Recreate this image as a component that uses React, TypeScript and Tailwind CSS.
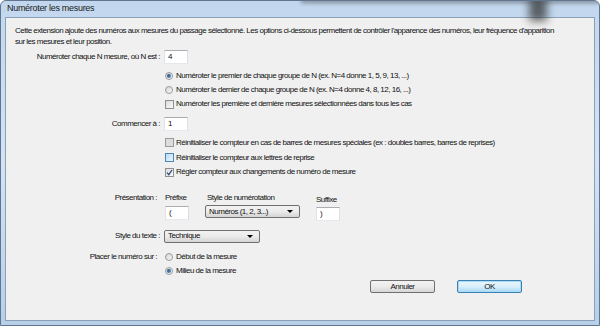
const font = { fontFamily: '"Liberation Sans", Arial, sans-serif' }

const Radio = ({ checked = false }: { checked?: boolean }) => (
    <span className="flex h-[8px] w-[8px] shrink-0 items-center justify-center rounded-full border border-[#9a9a9a] bg-gradient-to-br from-[#d2d2d2] to-[#fbfbfb]">
        {checked && <span className="h-[4px] w-[4px] rounded-full bg-gradient-to-br from-[#1b4a74] to-[#5a9bd0]" />}
    </span>
)

const Check = ({ variant = 'normal' }: { variant?: 'normal' | 'grey' | 'hover' | 'checked' }) => {
    const cls =
        variant === 'grey'
            ? 'border-[#9a9a9a] bg-[#dcdcdc]'
            : variant === 'hover'
              ? 'border-[#4f86b3] bg-gradient-to-br from-[#b9dcf4] to-[#e8f5fd]'
              : 'border-[#8f8f8f] bg-gradient-to-br from-[#dadada] to-[#fbfbfb]'
    return (
        <span className={`flex h-[9px] w-[9px] shrink-0 items-center justify-center border ${cls}`}>
            {variant === 'checked' && (
                <svg width="7" height="7" viewBox="0 0 7 7">
                    <path d="M1 3.6 L2.8 5.6 L6 1" stroke="#2a4b78" strokeWidth="1.3" fill="none" />
                </svg>
            )}
        </span>
    )
}

const TextBox = ({ value, w = 'w-[24px]' }: { value: string; w?: string }) => (
    <div className={`flex h-[14px] ${w} items-center border border-[#abadb3] border-l-[#e2e3ea] border-r-[#dbdfe6] border-b-[#e3e9ef] bg-white pl-[3px]`}>
        {value}
    </div>
)

const Combo = ({ value, w }: { value: string; w: string }) => (
    <div className={`flex h-[13px] ${w} items-center justify-between rounded-[2px] border border-[#707070] bg-gradient-to-b from-[#f2f2f2] via-[#ebebeb] to-[#d4d4d4] pl-[3px] pr-[6px]`}>
        <span>{value}</span>
        <span className="h-0 w-0 border-x-[3px] border-t-[3px] border-x-transparent border-t-black" />
    </div>
)

const Label = ({ children, pr = 'pr-0' }: { children: React.ReactNode; pr?: string }) => (
    <div className={`w-[154px] shrink-0 text-right ${pr}`}>{children}</div>
)

export default function App() {
    return (
        <div
            className="relative h-[326px] w-[600px] overflow-hidden rounded-t-[6px] border border-[#5f7590] bg-gradient-to-b from-[#c2d7ee] via-[#d3e3f4] to-[#b7cfe9] text-[8px] tracking-[-0.5px] text-[#111]"
            style={font}
        >
            <div className="absolute left-[528px] top-[-4px] h-[24px] w-[18px] bg-[#2a2a2a] opacity-70 blur-[4px]" />
            <div className="absolute left-[300px] top-[-2px] h-[4px] w-[300px] bg-[#333] opacity-50 blur-[2px]" />
            <div className="relative flex h-[16px] items-center pl-[6px] text-[9px] tracking-[-0.3px] text-[#1a1a1a]">
                Numéroter les mesures
            </div>
            <div className="mx-[4px] h-[304px] w-[590px] border border-[#8aa0b8] bg-[#f0f0f0]">
                <div className="pl-[9px] pt-[7px] leading-[11px]">
                    Cette extension ajoute des numéros aux mesures du passage sélectionné. Les options ci-dessous permettent de
                    contrôler l'apparence des numéros, leur fréquence d'apparition
                    <br />
                    sur les mesures et leur position.
                </div>

                <div className="mt-[3px] flex h-[14px] items-center">
                    <Label>Numéroter chaque N mesure, où N est :</Label>
                    <div className="ml-[4px]">
                        <TextBox value="4" />
                    </div>
                </div>

                <div className="mt-[4px] flex h-[15px] items-center pl-[159px]">
                    <Radio checked />
                    <span className="ml-[3px]">Numéroter le premier de chaque groupe de N (ex. N=4 donne 1, 5, 9, 13, ...)</span>
                </div>
                <div className="flex h-[14px] items-center pl-[159px]">
                    <Radio />
                    <span className="ml-[3px]">Numéroter le dernier de chaque groupe de N (ex. N=4 donne 4, 8, 12, 16, ...)</span>
                </div>
                <div className="flex h-[14px] items-center pl-[159px]">
                    <Check />
                    <span className="ml-[2px]">Numéroter les première et dernière mesures sélectionnées dans tous les cas</span>
                </div>

                <div className="mt-[6px] flex h-[14px] items-center">
                    <Label>Commencer à :</Label>
                    <div className="ml-[4px]">
                        <TextBox value="1" />
                    </div>
                </div>

                <div className="mt-[4px] flex h-[15px] items-center pl-[159px]">
                    <Check variant="grey" />
                    <span className="ml-[2px]">
                        Réinitialiser le compteur en cas de barres de mesures spéciales (ex : doubles barres, barres de reprises)
                    </span>
                </div>
                <div className="flex h-[15px] items-center pl-[159px]">
                    <Check variant="hover" />
                    <span className="ml-[2px]">Réinitialiser le compteur aux lettres de reprise</span>
                </div>
                <div className="flex h-[14px] items-center pl-[159px]">
                    <Check variant="checked" />
                    <span className="ml-[2px]">Régler compteur aux changements de numéro de mesure</span>
                </div>

                <div className="mt-[13px] flex">
                    <Label pr="pr-[3px]">
                        <div className="flex h-[12px] items-center justify-end">Présentation :</div>
                    </Label>
                    <div className="ml-[5px] flex w-[40px] flex-col">
                        <div className="flex h-[12px] items-center">Préfixe</div>
                        <div className="mt-[2px]">
                            <TextBox value="(" />
                        </div>
                    </div>
                    <div className="flex w-[111px] flex-col">
                        <div className="flex h-[12px] items-center pl-[2px]">Style de numérotation</div>
                        <div className="mt-[1px]">
                            <Combo value="Numéros (1, 2, 3...)" w="w-[95px]" />
                        </div>
                    </div>
                    <div className="flex flex-col pt-[2px]">
                        <div className="flex h-[12px] items-center">Suffixe</div>
                        <div className="mt-[1px]">
                            <TextBox value=")" />
                        </div>
                    </div>
                </div>

                <div className="mt-[8px] flex h-[14px] items-center">
                    <Label>Style du texte :</Label>
                    <div className="ml-[4px]">
                        <Combo value="Technique" w="w-[96px]" />
                    </div>
                </div>

                <div className="mt-[7px] flex h-[14px] items-center">
                    <Label pr="pr-[3px]">Placer le numéro sur :</Label>
                    <div className="ml-[5px] flex items-center">
                        <Radio />
                        <span className="ml-[3px]">Début de la mesure</span>
                    </div>
                </div>
                <div className="flex h-[14px] items-center pl-[159px]">
                    <Radio checked />
                    <span className="ml-[3px]">Milieu de la mesure</span>
                </div>

                <div className="mt-[2px] flex pl-[364px]">
                    <button className="flex h-[13px] w-[65px] items-center justify-center rounded-[2px] border border-[#707070] bg-gradient-to-b from-[#f2f2f2] via-[#ebebeb] to-[#d6d6d6] text-[8px]">
                        Annuler
                    </button>
                    <button className="ml-[22px] flex h-[13px] w-[65px] items-center justify-center rounded-[2px] border border-[#3c7fb1] bg-gradient-to-b from-[#eaf6fd] via-[#d9f0fc] to-[#a7d9f5] text-[8px] shadow-[inset_0_0_0_1px_#a8dbf8]">
                        OK
                    </button>
                </div>
            </div>
        </div>
    )
}
